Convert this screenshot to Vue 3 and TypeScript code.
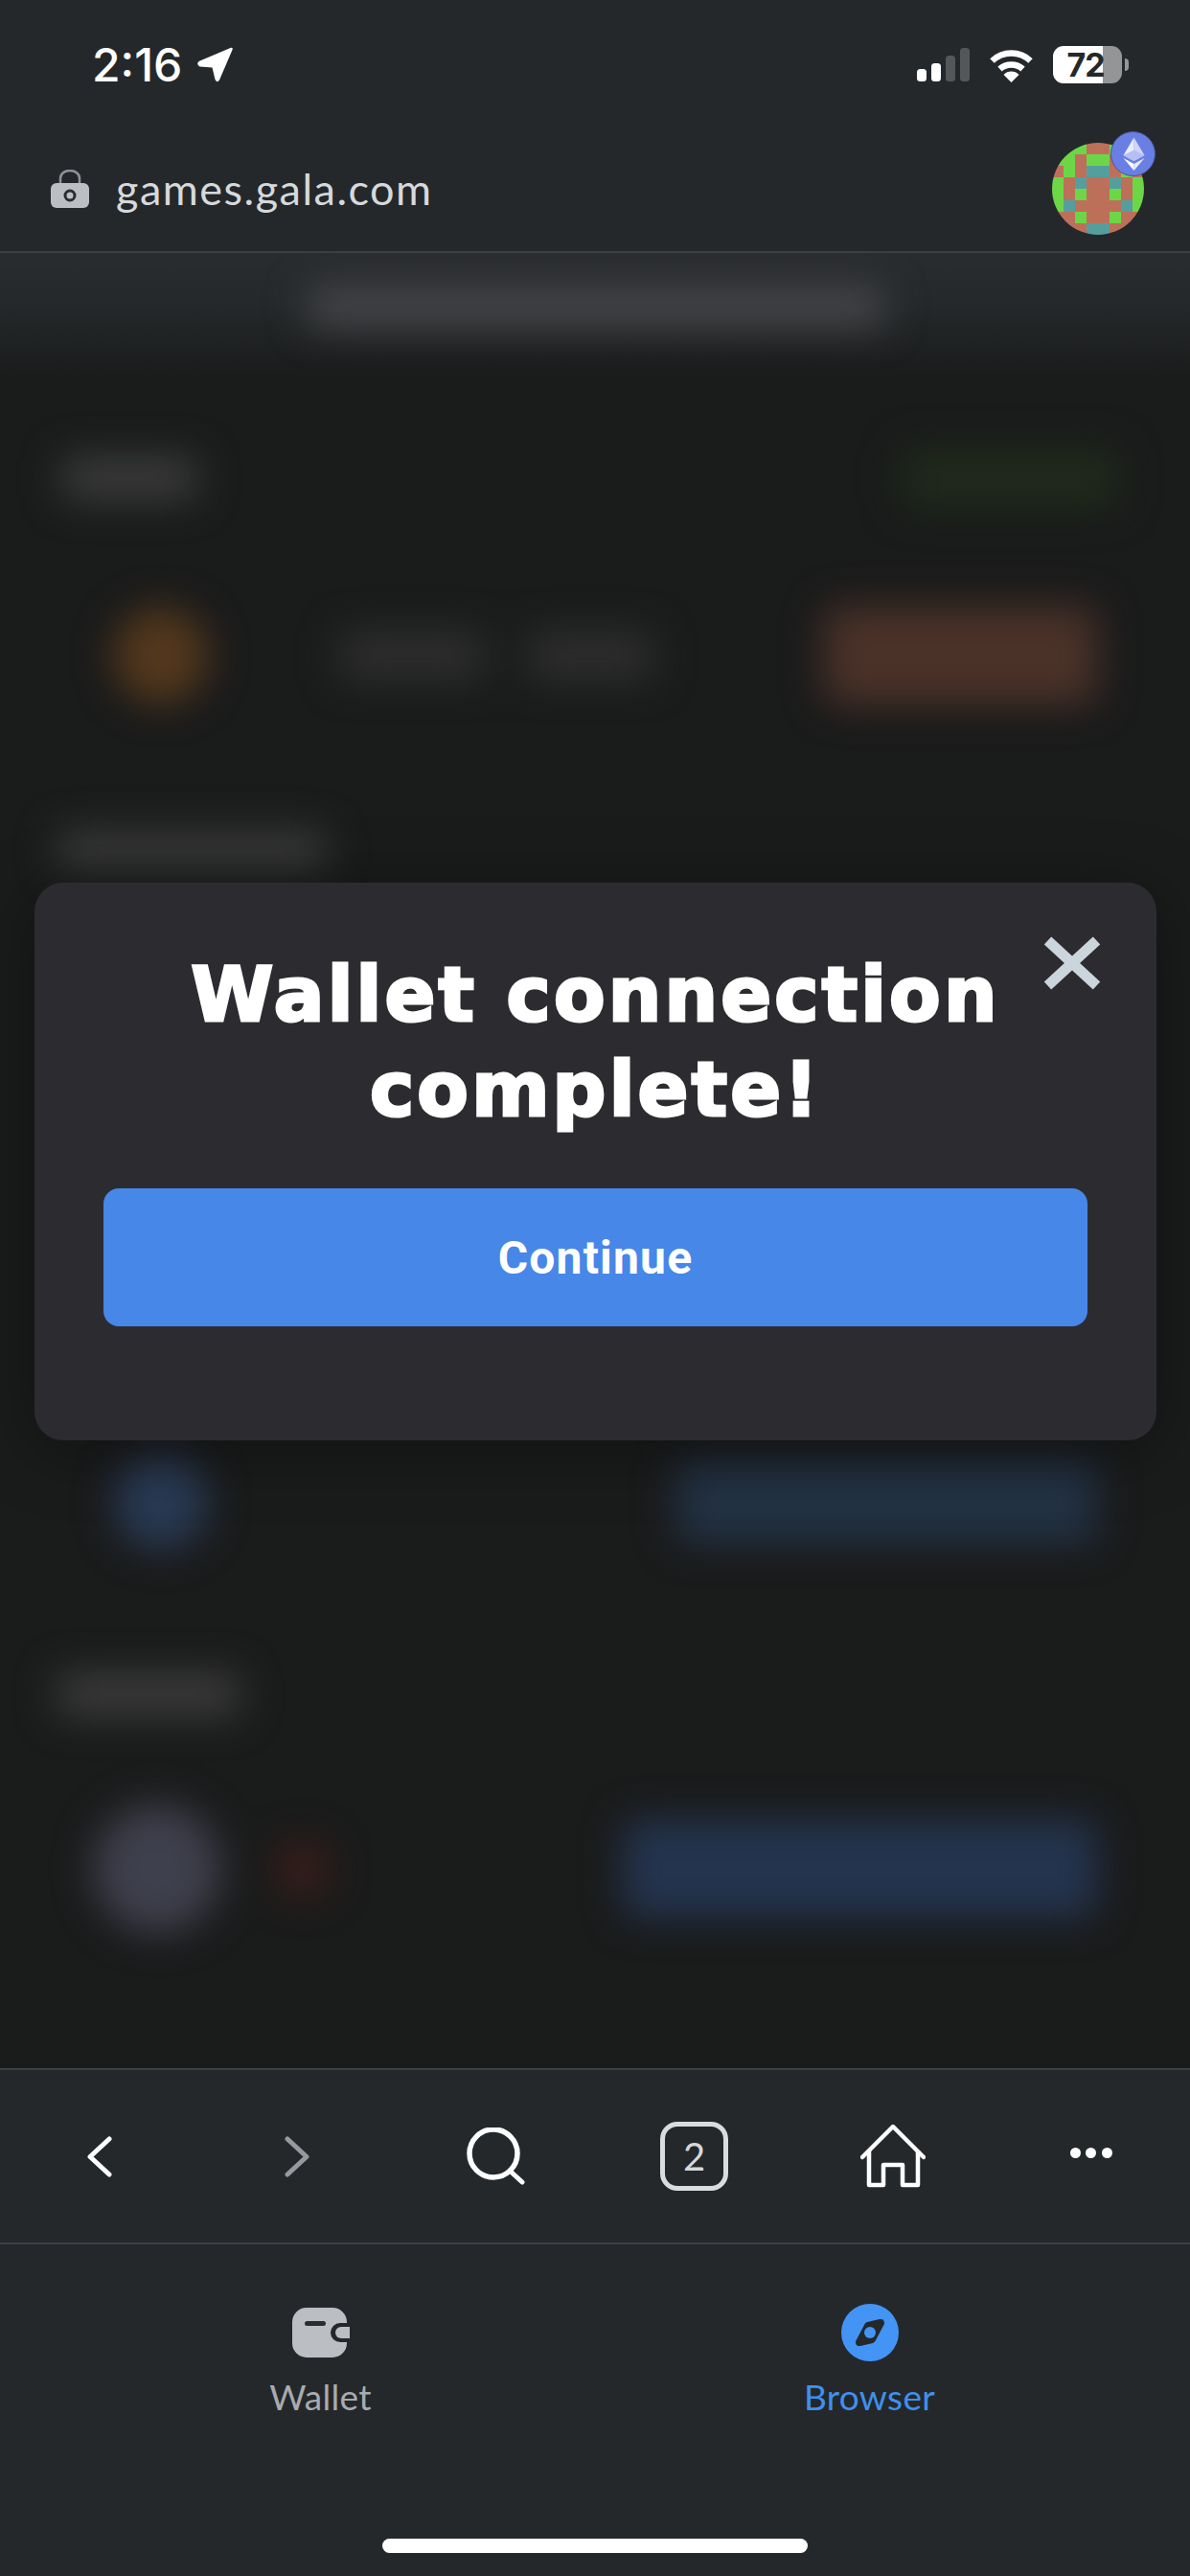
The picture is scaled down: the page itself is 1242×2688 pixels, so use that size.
<script setup lang="ts">
type Cell = 'g' | 'r' | 't'

// identicon, 8x8, read off row by row
const avatarRows = ['gggrrggg', 'ggrggrgg', 'rgrttrgr', 'grtrrtrg', 'grgrrgrg', 'gtrrrrtg', 'rrgrrgrr', 'rrrttrrr']
const avatarCells: Cell[] = avatarRows.join('').split('') as Cell[]

const batteryLevel = 72
const batteryFill = `linear-gradient(90deg, #fff ${batteryLevel}%, #949597 ${batteryLevel}%)`
</script>

<template>
  <div class="screen">
    <div class="status-bar">
      <div class="clock">
        <span class="time">2:16</span>
        <svg class="arrow" width="37" height="37" viewBox="0 0 37 37">
          <path d="M34.5 1 Q37.5 0 36.5 3 L23 34.5 Q20.5 38 18.5 34 L15.5 21.5 L2.5 20.5 Q-1.5 18 1.5 15 Z" fill="#fff" />
        </svg>
      </div>
      <div class="indicators">
        <svg width="55" height="35" viewBox="0 0 55 35">
          <rect x="0" y="22" width="10" height="13" rx="3.5" fill="#fff" />
          <rect x="15" y="16" width="10" height="19" rx="3.5" fill="#fff" />
          <rect x="30" y="8" width="10" height="27" rx="3.5" fill="#545659" />
          <rect x="45" y="0" width="10" height="35" rx="3.5" fill="#545659" />
        </svg>
        <svg width="47" height="36" viewBox="0 0 47 36">
          <path d="M3.5 13.5 A29 29 0 0 1 43.5 13.5" fill="none" stroke="#fff" stroke-width="6.5" />
          <path d="M11.5 22 A18 18 0 0 1 35.5 22" fill="none" stroke="#fff" stroke-width="6.5" />
          <path d="M23.5 36 L15.5 28 A11 11 0 0 1 31.5 28 Z" fill="#fff" />
        </svg>
        <div class="battery">
          <div class="battery-body" :style="{ background: batteryFill }">{{ batteryLevel }}</div>
          <div class="battery-nub"></div>
        </div>
      </div>
    </div>

    <div class="url-bar">
      <svg class="lock" width="40" height="40" viewBox="0 0 40 40">
        <path d="M10 16 V9 A10 8 0 0 1 30 9 V16" fill="none" stroke="#8e9196" stroke-width="2.5" />
        <rect x="0" y="14" width="40" height="26" rx="6" fill="#bbbec3" />
        <ellipse cx="20" cy="27" rx="5" ry="5" fill="none" stroke="#2a2d30" stroke-width="3" />
      </svg>
      <span class="url">games.gala.com</span>
      <div class="avatar">
        <div class="avatar-grid">
          <span v-for="(cell, i) in avatarCells" :key="i" :class="['px', cell]"></span>
        </div>
        <svg class="chain-badge" width="47" height="47" viewBox="0 0 47 47">
          <circle cx="23.5" cy="23.5" r="23" fill="#6a7fe4" stroke="#4a5693" stroke-width="1" />
          <path d="M24.5 6.5 L13.5 25 L24.5 31 Z" fill="#fff" fill-opacity=".85" />
          <path d="M24.5 6.5 L35.5 25 L24.5 31 Z" fill="#dfe4fb" fill-opacity=".85" />
          <path d="M13.5 25 L24.5 19.5 L35.5 25 L24.5 31 Z" fill="#b5c0f2" />
          <path d="M13.5 28 L24.5 34 L24.5 41 Z" fill="#fff" />
          <path d="M35.5 28 L24.5 34 L24.5 41 Z" fill="#e6eafc" />
        </svg>
      </div>
    </div>

    <main class="page">
      <div class="page-blur">
        <div class="ghost-title"></div>

        <div class="ghost-row status-row">
          <div class="ghost-label label-status"></div>
          <div class="ghost-pill green"></div>
        </div>

        <div class="ghost-row token-row">
          <div class="ghost-dot orange"></div>
          <div class="ghost-text"></div>
          <div class="ghost-text short"></div>
          <div class="ghost-btn red"></div>
        </div>

        <div class="ghost-label label-second"></div>

        <div class="ghost-row blue-row">
          <div class="ghost-dot blue"></div>
          <div class="ghost-btn blue-btn"></div>
        </div>

        <div class="ghost-label label-third"></div>

        <div class="ghost-row last-row">
          <div class="ghost-face"></div>
          <div class="ghost-small"></div>
          <div class="ghost-btn blue-btn wide"></div>
        </div>
      </div>

      <div class="modal">
        <button class="close" aria-label="Close">
          <svg width="60" height="56" viewBox="0 0 60 56">
            <path d="M4.5 4.5 L55.5 51.5 M55.5 4.5 L4.5 51.5" stroke="#cbd5dc" stroke-width="11" />
          </svg>
        </button>
        <h1 class="modal-title">Wallet connection complete!</h1>
        <button class="continue">Continue</button>
      </div>
    </main>

    <nav class="toolbar">
      <div class="tool">
        <svg width="27" height="43" viewBox="0 0 27 43">
          <path d="M24 3 L4 21.5 L24 40" fill="none" stroke="#fff" stroke-width="5" stroke-linecap="round" stroke-linejoin="round" />
        </svg>
      </div>
      <div class="tool">
        <svg width="27" height="43" viewBox="0 0 27 43">
          <path d="M3 3 L23 21.5 L3 40" fill="none" stroke="#97999e" stroke-width="5" stroke-linecap="round" stroke-linejoin="round" />
        </svg>
      </div>
      <div class="tool">
        <svg width="62" height="60" viewBox="0 0 62 60">
          <ellipse cx="28" cy="27" rx="25" ry="25" fill="none" stroke="#fff" stroke-width="5.5" />
          <path d="M45 45 L58 57" stroke="#fff" stroke-width="5" stroke-linecap="round" />
        </svg>
      </div>
      <div class="tool">
        <div class="tabs-count">2</div>
      </div>
      <div class="tool">
        <svg width="68" height="66" viewBox="0 0 68 66">
          <path d="M2 34 L34 2 L66 34" fill="none" stroke="#fff" stroke-width="4.5" stroke-linecap="round" stroke-linejoin="round" />
          <path d="M9 27 V63 H24 V42 H44 V63 H60 V27" fill="none" stroke="#fff" stroke-width="4.5" stroke-linejoin="round" />
        </svg>
      </div>
      <div class="tool">
        <div class="dots"><i></i><i></i><i></i></div>
      </div>
    </nav>

    <div class="tabbar">
      <div class="tab">
        <svg width="60" height="60" viewBox="0 0 60 60">
          <rect x="0" y="4" width="57" height="52" rx="15" fill="#bbbec3" />
          <rect x="13" y="18" width="22" height="5" rx="2.5" fill="#2a2d30" />
          <rect x="40" y="20" width="26" height="20" rx="10" fill="#24282b" />
          <path d="M60 24 H51 A6 6 0 0 0 51 36 H60 Z" fill="#bbbec3" />
        </svg>
        <span class="tab-label">Wallet</span>
      </div>
      <div class="tab active">
        <svg width="60" height="60" viewBox="0 0 60 60">
          <circle cx="30" cy="30" r="30" fill="#4394f5" />
          <path d="M28 23 L41 20 L32 37 L19 40 Z" fill="#24282b" stroke="#24282b" stroke-width="8" stroke-linejoin="round" />
          <circle cx="30" cy="30" r="6" fill="#4394f5" />
        </svg>
        <span class="tab-label">Browser</span>
      </div>
    </div>

    <div class="home-area">
      <div class="home-indicator"></div>
    </div>
  </div>
</template>

<style scoped>
.screen {
  width: 1242px;
  height: 2688px;
  display: flex;
  flex-direction: column;
  background: #24282b;
  overflow: hidden;
  font-family: Lato, "Noto Sans", sans-serif;
}

.status-bar {
  height: 135px;
  flex: none;
  display: flex;
  align-items: center;
  padding: 0 64px 0 96px;
  box-sizing: border-box;
}

.clock {
  display: flex;
  align-items: center;
  gap: 16px;
}

.time {
  font-family: Inter, sans-serif;
  font-size: 48px;
  font-weight: 500;
  color: #fff;
}

.indicators {
  margin-left: auto;
  display: flex;
  align-items: center;
  gap: 20px;
}

.battery {
  display: flex;
  align-items: center;
  gap: 3px;
}

.battery-body {
  width: 72px;
  height: 39px;
  border-radius: 11px;
  display: flex;
  align-items: center;
  justify-content: center;
  padding-right: 4px;
  box-sizing: border-box;
  font-family: Inter, sans-serif;
  font-size: 34px;
  font-weight: 700;
  letter-spacing: -1px;
  color: #24282b;
}

.battery-nub {
  width: 4px;
  height: 13px;
  background: #949597;
  border-radius: 0 4px 4px 0;
}

.url-bar {
  height: 129px;
  flex: none;
  box-sizing: border-box;
  display: flex;
  align-items: center;
  padding: 0 48px 3px 53px;
  border-bottom: 2px solid #3c4044;
}

.url {
  margin-left: 28px;
  font-size: 45px;
  color: #d6d9dc;
  letter-spacing: 1.5px;
}

.avatar {
  margin-left: auto;
  position: relative;
  width: 96px;
  height: 96px;
}

.avatar-grid {
  display: grid;
  grid-template-columns: repeat(8, 12px);
  grid-auto-rows: 12px;
  border-radius: 50%;
  overflow: hidden;
}

.px.g { background: #6dd647; }
.px.r { background: #bd7059; }
.px.t { background: #559e9e; }

.chain-badge {
  position: absolute;
  left: 61px;
  top: -12px;
}

.page {
  flex: 1;
  min-height: 0;
  position: relative;
  overflow: hidden;
  background: linear-gradient(#2a2c2f 0, #25292b 50px, #1a1b1b 132px);
}

.page-blur {
  display: flex;
  flex-direction: column;
  padding-top: 36px;
  filter: blur(20px);
}

.ghost-title {
  width: 600px;
  height: 40px;
  margin-left: 322px;
  background: #48484b;
}

.ghost-row {
  display: flex;
  align-items: center;
}

.status-row {
  margin-top: 128px;
  height: 62px;
  padding: 0 74px 0 65px;
  justify-content: space-between;
}

.ghost-label {
  background: #3c3c3c;
  border-radius: 6px;
}

.label-status {
  width: 140px;
  height: 44px;
}

.ghost-pill.green {
  width: 228px;
  height: 62px;
  border-radius: 12px;
  background: #1f2a1b;
}

.token-row {
  margin-top: 103px;
  height: 102px;
  padding: 0 97px 0 118px;
}

.ghost-dot {
  width: 100px;
  height: 100px;
  border-radius: 50%;
}

.ghost-dot.orange { background: #54381d; }
.ghost-dot.blue { background: #293a54; }

.ghost-text {
  width: 150px;
  height: 50px;
  margin-left: 137px;
  background: #2e2e2e;
}

.ghost-text.short {
  margin-left: 46px;
  width: 130px;
}

.ghost-btn {
  margin-left: auto;
  border-radius: 12px;
}

.ghost-btn.red {
  width: 285px;
  height: 102px;
  background: #4b3229;
}

.label-second {
  margin: 133px 0 0 60px;
  width: 280px;
  height: 38px;
}

.blue-row {
  margin-top: 610px;
  height: 102px;
  padding: 0 97px 0 118px;
}

.blue-btn {
  width: 440px;
  height: 86px;
  background: #233245;
}

.blue-btn.wide {
  width: 495px;
  height: 102px;
  background: #24344f;
}

.label-third {
  margin: 128px 0 0 60px;
  width: 190px;
  height: 44px;
}

.last-row {
  margin-top: 90px;
  height: 140px;
  padding: 0 97px;
}

.ghost-face {
  width: 134px;
  height: 134px;
  border-radius: 50%;
  background: #3f404d;
}

.ghost-small {
  width: 58px;
  height: 58px;
  margin-left: 56px;
  border-radius: 50%;
  background: #3a1e1a;
}

.modal {
  position: absolute;
  left: 36px;
  top: 657px;
  width: 1171px;
  height: 582px;
  box-sizing: border-box;
  padding: 68px 72px 0;
  display: flex;
  flex-direction: column;
  align-items: center;
  background: #2c2c30;
  border-radius: 30px;
  box-shadow: 0 10px 70px rgba(0, 0, 0, .35);
}

.close {
  position: absolute;
  top: 56px;
  right: 58px;
  padding: 0;
  display: flex;
  border: none;
  background: none;
}

.modal-title {
  margin: 0;
  width: 900px;
  font-family: "DejaVu Sans", sans-serif;
  font-size: 78px;
  font-weight: 700;
  letter-spacing: 3.2px;
  -webkit-text-stroke: 3px #fff;
  line-height: 99px;
  text-align: center;
  color: #fff;
}

.continue {
  margin-top: 53px;
  width: 100%;
  height: 144px;
  flex: none;
  border: none;
  border-radius: 16px;
  background: #4787e8;
  color: #fff;
  font-family: Roboto, sans-serif;
  font-size: 48px;
  font-weight: 700;
  letter-spacing: 1.2px;
}

.toolbar {
  height: 184px;
  flex: none;
  box-sizing: border-box;
  display: grid;
  grid-template-columns: repeat(6, 207px);
  border-top: 2px solid #3c4044;
  border-bottom: 2px solid #3c4044;
}

.tool {
  display: flex;
  align-items: center;
  justify-content: center;
}

.tabs-count {
  width: 71px;
  height: 72px;
  box-sizing: border-box;
  display: flex;
  align-items: center;
  justify-content: center;
  border: 5px solid #dadcdf;
  border-radius: 18px;
  font-size: 40px;
  color: #d6d8db;
}

.dots {
  display: flex;
  gap: 5.5px;
  margin-bottom: 7px;
}

.dots i {
  width: 11px;
  height: 11px;
  border-radius: 50%;
  background: #fff;
}

.tabbar {
  display: grid;
  grid-template-columns: repeat(2, 573px);
  padding: 62px 48px 0;
  flex: none;
}

.tab {
  display: flex;
  flex-direction: column;
  align-items: center;
  gap: 15px;
}

.tab-label {
  font-size: 37px;
  line-height: 44px;
  letter-spacing: .3px;
  color: #a8abaf;
}

.tab.active .tab-label {
  color: #3f90ee;
}

.home-area {
  height: 165px;
  flex: none;
  box-sizing: border-box;
  display: flex;
  align-items: flex-end;
  justify-content: center;
  padding-bottom: 24px;
}

.home-indicator {
  width: 444px;
  height: 15px;
  border-radius: 7.5px;
  background: #fff;
}
</style>

<style>
html, body {
  margin: 0;
  background: #24282b;
}
</style>
